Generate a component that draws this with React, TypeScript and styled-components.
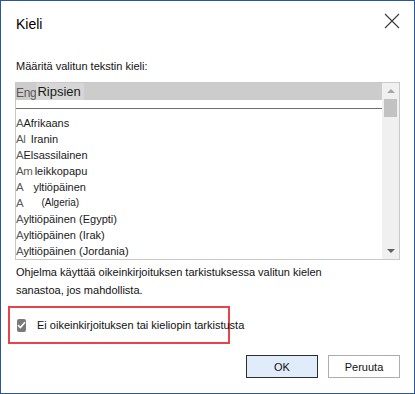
import React from 'react';
import styled, { createGlobalStyle } from 'styled-components';

const GlobalStyle = createGlobalStyle`
  html, body {
    margin: 0;
    padding: 0;
    background: #ffffff;
  }
  * {
    box-sizing: border-box;
  }
`;

const languages: LanguageRow[] = [
  { prefix: 'A', name: 'Afrikaans' },
  { prefix: 'Al', name: 'Iranin', indent: 5 },
  { prefix: 'A', name: 'Elsassilainen' },
  { prefix: 'Am', name: 'leikkopapu', indent: 2 },
  { prefix: 'A', name: 'yltiöpäinen', indent: 10 },
  { prefix: 'A', name: '(Algeria)', indent: 18, small: true },
  { prefix: 'A', name: 'yltiöpäinen (Egypti)' },
  { prefix: 'A', name: 'yltiöpäinen (Irak)' },
  { prefix: 'A', name: 'yltiöpäinen (Jordania)' },
];

const App = () => {
  return (
    <>
      <GlobalStyle />
      <Window>
        <TitleBar>
          <Title>Kieli</Title>
          <CloseButton aria-label="Sulje">
            <svg width="16" height="16" viewBox="0 0 16 16">
              <path d="M1 1 L15 15 M15 1 L1 15" stroke="#3a3a3a" strokeWidth="1.1" fill="none" />
            </svg>
          </CloseButton>
        </TitleBar>

        <Body>
          <FieldLabel>Määritä valitun tekstin kieli:</FieldLabel>

          <ListBox>
            <Rows>
              <SelectedRow>
                <Prefix $size={12}>Eng</Prefix>
                <SelectedName>Ripsien</SelectedName>
              </SelectedRow>
              <Divider />
              {languages.map((lang) => (
                <Row key={lang.name}>
                  <Prefix $size={11.5}>{lang.prefix}</Prefix>
                  <Name $indent={lang.indent || 0} $small={!!lang.small}>
                    {lang.name}
                  </Name>
                </Row>
              ))}
            </Rows>
            <ScrollBar>
              <Arrow $up />
              <Thumb />
              <Track />
              <Arrow />
            </ScrollBar>
          </ListBox>

          <Description>
            Ohjelma käyttää oikeinkirjoituksen tarkistuksessa valitun kielen
            <br />
            sanastoa, jos mahdollista.
          </Description>

          <Highlight>
            <CheckBox>
              <svg width="9" height="8" viewBox="0 0 9 8">
                <path d="M1 4.2 L3.4 6.5 L8 1.3" stroke="#ffffff" strokeWidth="1.6" fill="none" />
              </svg>
            </CheckBox>
            <CheckLabel>Ei oikeinkirjoituksen tai kieliopin tarkistusta</CheckLabel>
          </Highlight>

          <Buttons>
            <Button $primary>OK</Button>
            <Button>Peruuta</Button>
          </Buttons>
        </Body>
      </Window>
    </>
  );
};

export default App;

const Window = styled.div`
  width: 415px;
  height: 394px;
  border: 1px solid #2b579a;
  background: #ffffff;
  display: flex;
  flex-direction: column;
  font-family: 'Liberation Sans', Arial, sans-serif;
  color: #111111;
`;

const TitleBar = styled.div`
  height: 45px;
  display: flex;
  align-items: center;
  justify-content: space-between;
  padding: 0 14px 0 15px;
`;

const Title = styled.div`
  font-size: 14px;
  color: #000000;
`;

const CloseButton = styled.button`
  width: 16px;
  height: 16px;
  padding: 0;
  border: none;
  background: transparent;
  display: flex;
  margin-top: -5px;
`;

const Body = styled.div`
  flex: 1;
  display: flex;
  flex-direction: column;
  padding: 0 14px 0 14px;
`;

const FieldLabel = styled.div`
  margin-top: 12px;
  font-size: 11px;
  line-height: 16px;
  padding-left: 1px;
`;

const ListBox = styled.div`
  margin-top: 8px;
  height: 178px;
  width: 385px;
  border: 1px solid #c9c9c9;
  display: flex;
  overflow: hidden;
`;

const Rows = styled.div`
  flex: 1;
  display: flex;
  flex-direction: column;
  font-size: 11px;
`;

const SelectedRow = styled.div`
  height: 17px;
  background: #cccccc;
  display: flex;
  align-items: flex-end;
  white-space: nowrap;
`;

const SelectedName = styled.span`
  font-size: 13px;
  line-height: 17px;
  background: #d6d6d6;
  padding: 0 3px 0 1px;
  color: #1a1a1a;
`;

const Divider = styled.div`
  height: 16px;
  &::after {
    content: '';
    display: block;
    margin-top: 8px;
    height: 1px;
    background: #6e6e6e;
  }
`;

const Row = styled.div`
  height: 16.3px;
  line-height: 16px;
  display: flex;
  align-items: center;
  white-space: nowrap;
  color: #1a1a1a;
`;

const Prefix = styled.span<{ $size: number }>`
  font-size: ${(p) => p.$size}px;
  color: #5a5a5a;
  font-weight: 300;
  letter-spacing: -0.3px;
`;

const Name = styled.span<{ $indent: number; $small: boolean }>`
  margin-left: ${(p) => p.$indent}px;
  font-size: ${(p) => (p.$small ? 10 : 11)}px;
`;

const ScrollBar = styled.div`
  width: 17px;
  background: #f0f0f0;
  display: flex;
  flex-direction: column;
  align-items: center;
`;

const Arrow = styled.div<{ $up?: boolean }>`
  height: 16px;
  width: 17px;
  flex-shrink: 0;
  display: flex;
  align-items: center;
  justify-content: center;
  &::before {
    content: '';
    width: 0;
    height: 0;
    border-left: 4px solid transparent;
    border-right: 4px solid transparent;
    ${(p) =>
      p.$up
        ? 'border-bottom: 4px solid #a6a6a6;'
        : 'border-top: 4px solid #606060;'}
  }
`;

const Thumb = styled.div`
  width: 13px;
  height: 18px;
  background: #c2c2c2;
  flex-shrink: 0;
`;

const Track = styled.div`
  flex: 1;
`;

const Description = styled.div`
  margin-top: 3px;
  font-size: 11px;
  line-height: 18px;
  padding-left: 1px;
`;

const Highlight = styled.div`
  margin-top: 7px;
  margin-left: -7px;
  width: 222px;
  height: 38px;
  border: 2px solid #e8434b;
  display: flex;
  align-items: center;
  padding-left: 7px;
  gap: 11px;
`;

const CheckBox = styled.div`
  width: 13px;
  height: 13px;
  border-radius: 2px;
  background: #7a7a7a;
  display: flex;
  align-items: center;
  justify-content: center;
`;

const CheckLabel = styled.span`
  font-size: 11px;
  white-space: nowrap;
  color: #111111;
`;

const Buttons = styled.div`
  margin-top: 11px;
  display: flex;
  justify-content: flex-end;
  gap: 10px;
`;

const Button = styled.button<{ $primary?: boolean }>`
  width: 72px;
  height: 23px;
  font-family: 'Liberation Sans', Arial, sans-serif;
  font-size: 11px;
  color: #111111;
  background: ${(p) => (p.$primary ? '#e1ecfa' : '#ffffff')};
  border: 1px solid ${(p) => (p.$primary ? '#2d2d2d' : '#adadad')};
  border-radius: 0;
  padding: 0;
`;

interface LanguageRow {
  prefix: string;
  name: string;
  indent?: number;
  small?: boolean;
}
